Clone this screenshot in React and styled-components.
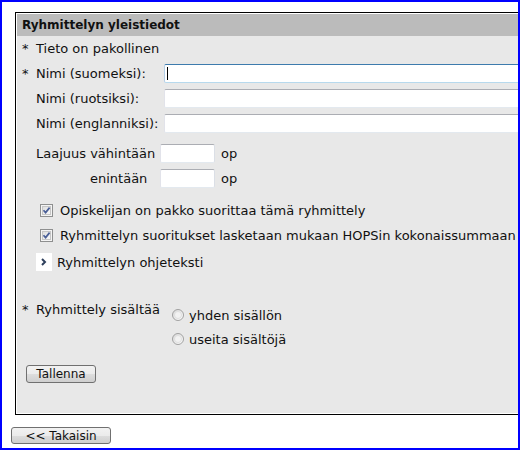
import React from "react"
import styled, { createGlobalStyle } from "styled-components"

const GlobalStyle = createGlobalStyle`
  html, body {
    margin: 0;
    padding: 0;
    background: #fff;
  }
  body {
    font-family: "DejaVu Sans", Verdana, sans-serif;
    font-size: 13px;
    color: #111;
  }
`

function CheckBox() {
  return (
    <svg width="13" height="13" viewBox="0 0 13 13">
      <defs>
        <linearGradient id="cbg" x1="0" y1="0" x2="1" y2="1">
          <stop offset="0" stopColor="#dcdcdc" />
          <stop offset="1" stopColor="#fbfbfb" />
        </linearGradient>
      </defs>
      <rect x="0.5" y="0.5" width="12" height="12" fill="#f4f4f4" stroke="#8e8f8f" />
      <rect x="2.5" y="2.5" width="8" height="8" fill="url(#cbg)" stroke="#c6c6c6" />
      <path d="M3.5 6.2 L5.6 8.6 L9.6 3.6" fill="none" stroke="#4a5f97" strokeWidth="1.7" />
    </svg>
  )
}

function Radio() {
  return (
    <svg width="12" height="12" viewBox="0 0 12 12">
      <defs>
        <linearGradient id="rdg" x1="0" y1="0" x2="1" y2="1">
          <stop offset="0" stopColor="#d6d6d6" />
          <stop offset="1" stopColor="#ffffff" />
        </linearGradient>
      </defs>
      <circle cx="6" cy="6" r="5.5" fill="url(#rdg)" stroke="#a0a0a0" />
      <circle cx="6" cy="6" r="3.5" fill="#f2f2f2" stroke="#dadada" strokeWidth="0.8" />
    </svg>
  )
}

export default function App() {
  return (
    <>
      <GlobalStyle />
      <Frame>
        <Panel>
          <Header>Ryhmittelyn yleistiedot</Header>
          <Body>
            <NameGrid>
              <Wide>
                <Star>*</Star>Tieto on pakollinen
              </Wide>
              <Label>
                <Star>*</Star>Nimi (suomeksi):
              </Label>
              <Field>
                <TextInput $focused />
                <Caret />
              </Field>
              <Label>
                <Star />Nimi (ruotsiksi):
              </Label>
              <Field>
                <TextInput />
              </Field>
              <Label>
                <Star />Nimi (englanniksi):
              </Label>
              <Field>
                <TextInput />
              </Field>
            </NameGrid>

            <ScopeGrid>
              <span>Laajuus vähintään</span>
              <SmallInput />
              <span>op</span>
              <ScopeIndent>enintään</ScopeIndent>
              <SmallInput />
              <span>op</span>
            </ScopeGrid>

            <Checks>
              <CheckRow>
                <CheckBox />
                Opiskelijan on pakko suorittaa tämä ryhmittely
              </CheckRow>
              <CheckRow>
                <CheckBox />
                Ryhmittelyn suoritukset lasketaan mukaan HOPSin kokonaissummaan
              </CheckRow>
            </Checks>

            <Expander>
              <ChevronBox>
                <svg width="16" height="18" viewBox="0 0 16 18">
                  <path d="M6 6 L9 9 L6 12" fill="none" stroke="#2e3f5c" strokeWidth="2" />
                </svg>
              </ChevronBox>
              Ryhmittelyn ohjeteksti
            </Expander>

            <RadioGrid>
              <RadioLabel>
                <Star>*</Star>Ryhmittely sisältää
              </RadioLabel>
              <RadioRow>
                <Radio />
                yhden sisällön
              </RadioRow>
              <RadioRow>
                <Radio />
                useita sisältöjä
              </RadioRow>
            </RadioGrid>

            <SaveRow>
              <Button $width="70px" $height="18px">Tallenna</Button>
            </SaveRow>
          </Body>
        </Panel>
        <Button $width="100px" $height="17px" $top="12px">
          &lt;&lt; Takaisin
        </Button>
      </Frame>
    </>
  )
}

const Frame = styled.div`
  width: 520px;
  height: 450px;
  box-sizing: border-box;
  border: 2px solid #0000ff;
  overflow: hidden;
  padding: 10px 0 0 9px;
`
const Panel = styled.div`
  margin-left: 4px;
  width: 560px;
  box-sizing: border-box;
  border: 1px solid #000;
  background: #fff;
  padding: 1px;
`
const Header = styled.div`
  background: #bbbbbb;
  height: 22px;
  line-height: 22px;
  padding-left: 5px;
  font-weight: bold;
  font-size: 12px;
  color: #111;
`
const Body = styled.div`
  background: #e8e8e8;
  height: 377px;
  padding: 0 5px;
  overflow: hidden;
`
const NameGrid = styled.div`
  display: grid;
  grid-template-columns: 142px 1fr;
  grid-auto-rows: 25px;
  align-items: center;
`
const Wide = styled.div`
  grid-column: 1 / -1;
  white-space: nowrap;
`
const Star = styled.span`
  display: inline-block;
  width: 14px;
`
const Label = styled.div`
  white-space: nowrap;
`
const Field = styled.div`
  position: relative;
  height: 19px;
`
const TextInput = styled.input.attrs({ type: "text" })`
  display: block;
  width: 100%;
  height: 19px;
  box-sizing: border-box;
  margin: 0;
  border: 1px solid;
  border-radius: 2px;
  border-color: ${(p) =>
    p.$focused
      ? "#3d7bad #a4c9e3 #b7d9ed #b5cfe7"
      : "#abadb3 #dbdfe6 #e3e9ef #e2e3ea"};
  background: #fff;
  outline: none;
`
const Caret = styled.span`
  position: absolute;
  left: 3px;
  top: 3px;
  width: 1px;
  height: 13px;
  background: #000;
`
const ScopeGrid = styled.div`
  margin-top: 5px;
  padding-left: 14px;
  display: grid;
  grid-template-columns: 124px 61px auto;
  grid-auto-rows: 25px;
  align-items: center;
  white-space: nowrap;
`
const ScopeIndent = styled.span`
  padding-left: 54px;
`
const SmallInput = styled(TextInput)`
  width: 55px;
`
const Checks = styled.div`
  margin-top: 7px;
  padding-left: 18px;
`
const CheckRow = styled.div`
  display: flex;
  align-items: center;
  gap: 7px;
  height: 25px;
  white-space: nowrap;
  svg {
    flex: none;
  }
`
const Expander = styled.div`
  margin-top: 5px;
  padding-left: 14px;
  display: flex;
  align-items: center;
  gap: 5px;
  height: 18px;
`
const ChevronBox = styled.span`
  display: block;
  width: 16px;
  height: 18px;
  background: #fff;
  svg {
    display: block;
  }
`
const RadioGrid = styled.div`
  margin-top: 32px;
  display: grid;
  grid-template-columns: 150px auto;
  grid-auto-rows: 24px;
  align-items: center;
`
const RadioLabel = styled.div`
  grid-row: 1 / span 2;
  align-self: start;
  line-height: 16px;
  margin-top: -1px;
  white-space: nowrap;
`
const RadioRow = styled.div`
  grid-column: 2;
  display: flex;
  align-items: center;
  gap: 5px;
  white-space: nowrap;
  svg {
    flex: none;
  }
`
const SaveRow = styled.div`
  margin-top: 14px;
  padding-left: 4px;
`
const Button = styled.button`
  display: block;
  width: ${(p) => p.$width};
  height: ${(p) => p.$height};
  margin: ${(p) => p.$top || 0} 0 0 0;
  padding: 0;
  box-sizing: border-box;
  border: 1px solid #707070;
  border-radius: 3px;
  background: linear-gradient(#f2f2f2 0%, #ebebeb 50%, #dddddd 51%, #cfcfcf 100%);
  font-family: "DejaVu Sans", Verdana, sans-serif;
  font-size: 12px;
  line-height: 1;
  color: #111;
`
